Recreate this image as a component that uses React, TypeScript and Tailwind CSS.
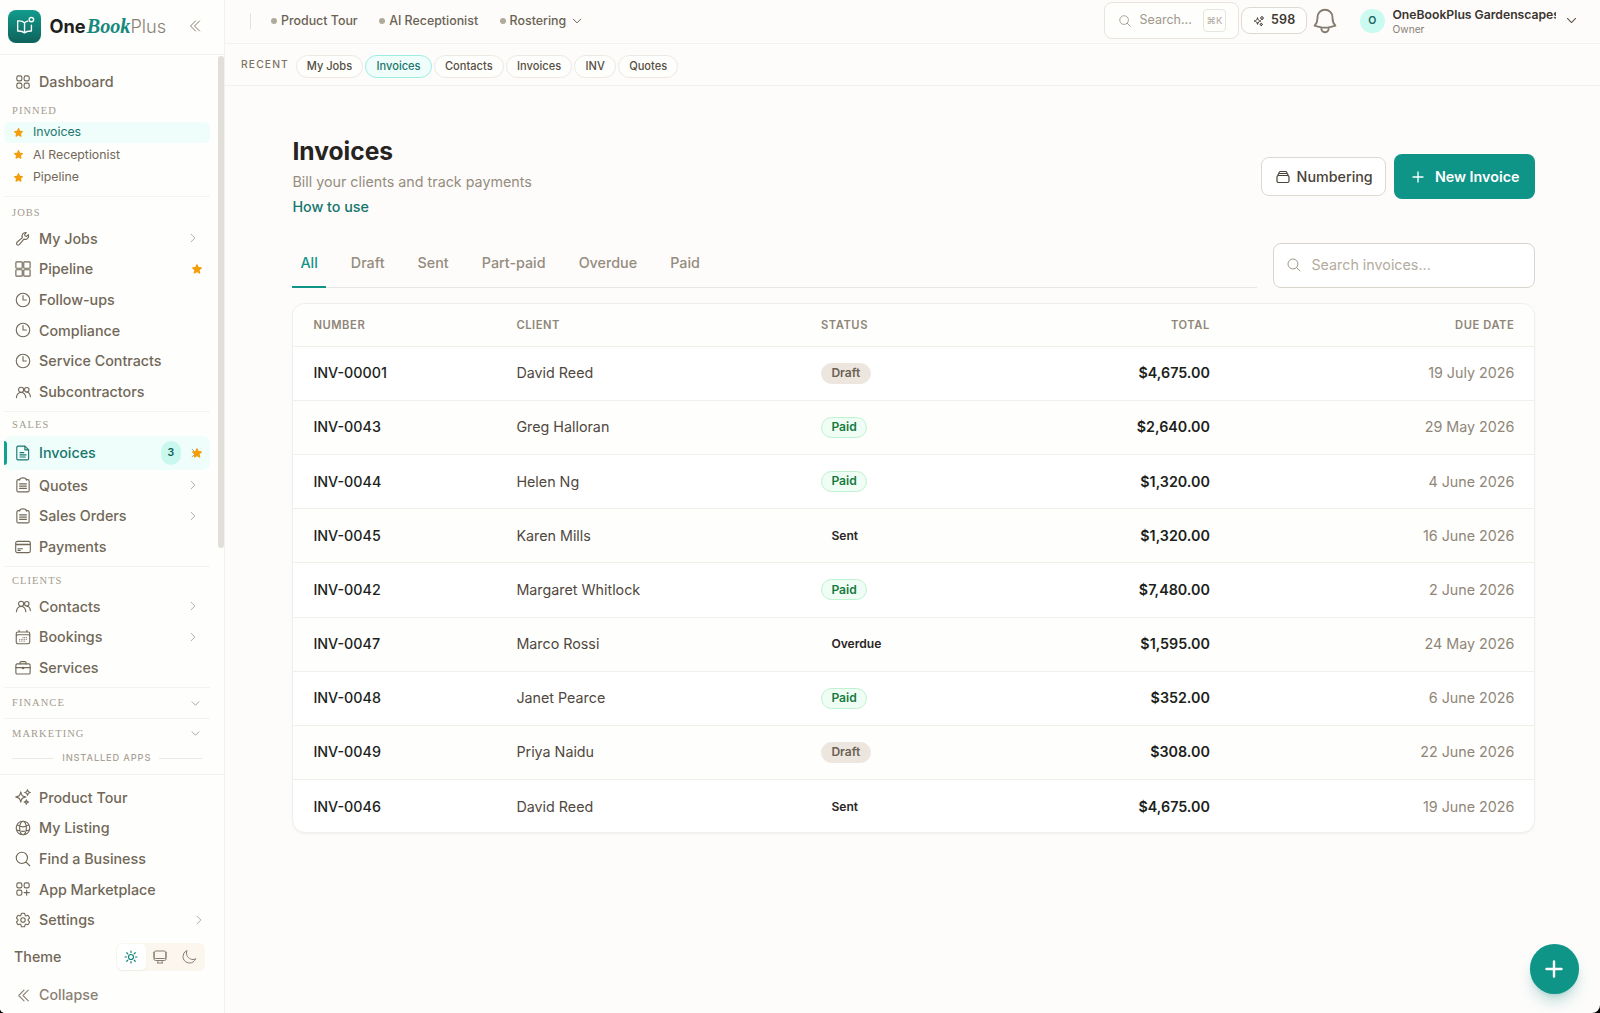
import type { ReactNode } from "react";
import {
  HiOutlineBell,
  HiOutlineCalendarDays,
  HiOutlineChevronDoubleLeft,
  HiOutlineChevronDown,
  HiOutlineChevronRight,
  HiOutlineClock,
  HiOutlineCog6Tooth,
  HiOutlineComputerDesktop,
  HiOutlineCreditCard,
  HiOutlineGlobeAlt,
  HiOutlineMagnifyingGlass,
  HiOutlineMoon,
  HiOutlinePlus,
  HiOutlineRectangleStack,
  HiOutlineSparkles,
  HiOutlineSquares2X2,
  HiOutlineSquaresPlus,
  HiOutlineSun,
  HiStar,
} from "react-icons/hi2";

const Svg = ({ children, className = "size-[18px]" }: { children: ReactNode; className?: string }) => (
  <svg
    viewBox="0 0 24 24"
    fill="none"
    stroke="currentColor"
    strokeWidth="1.5"
    strokeLinecap="round"
    strokeLinejoin="round"
    className={className}
  >
    {children}
  </svg>
);

const WrenchIcon = () => (
  <Svg>
    <path d="m11.200 11.400-7.200 6.300a2.100 2.100 0 0 0 3 3l6.300-7.200a4.600 4.600 0 0 0 5.900-6l-2.400 2.300-2.100-.5-.5-2.100 2.200-2.300a4.600 4.600 0 0 0-5.200 6.500Z" />
  </Svg>
);

const GridIcon = () => (
  <Svg>
    <rect x="2.5" y="2.5" width="8.5" height="8.5" rx="1" />
    <rect x="13" y="2.5" width="8.5" height="8.5" rx="1" />
    <rect x="2.5" y="13" width="8.5" height="8.5" rx="1" />
    <rect x="13" y="13" width="8.5" height="8.5" rx="1" />
  </Svg>
);

const PeopleIcon = () => (
  <Svg>
    <circle cx="9.5" cy="9" r="3.4" />
    <circle cx="17" cy="9" r="3" />
    <path d="M3.2 19.5c.4-4 2.900-6.900 6.300-6.900s5.900 2.900 6.300 6.900M17 12.200c2.600.2 4.500 2.600 4.900 6" />
  </Svg>
);

const DocIcon = () => (
  <Svg>
    <path d="M5.500 2.800h9l5 5v11.400a2 2 0 0 1-2 2h-12a1.800 1.800 0 0 1-1.800-1.800V4.600a1.800 1.800 0 0 1 1.800-1.800Z" />
    <path d="M14.500 3v4.800h4.800M8 11.500h5M8 14.500h8M8 17.300h7" />
  </Svg>
);

const ClipboardIcon = () => (
  <Svg>
    <path d="M7.500 4.800H5.800a2 2 0 0 0-2 2v12.400a2 2 0 0 0 2 2h12.400a2 2 0 0 0 2-2V6.800a2 2 0 0 0-2-2h-1.700" />
    <path d="M7.500 5.200c0-1.800 1.500-2.700 4.500-2.700s4.500.9 4.500 2.700M7.500 10.500h9M7.500 13.500h9M7.500 16.500h9" />
  </Svg>
);

const BriefcaseIcon = () => (
  <Svg>
    <rect x="2.500" y="6.500" width="19" height="13.500" rx="1.800" />
    <path d="M8 6.500V5a1.500 1.500 0 0 1 1.500-1.500h5A1.500 1.500 0 0 1 16 5v1.500M2.500 11.500h19" />
    <circle cx="12" cy="12" r="1" fill="currentColor" />
  </Svg>
);

const iconClass = "size-[18px]";

type NavItem = { label: string; icon: ReactNode; chevron?: boolean; star?: boolean };

const jobs: NavItem[] = [
  { label: "My Jobs", icon: <WrenchIcon />, chevron: true },
  { label: "Pipeline", icon: <GridIcon />, star: true },
  { label: "Follow-ups", icon: <HiOutlineClock className={iconClass} /> },
  { label: "Compliance", icon: <HiOutlineClock className={iconClass} /> },
  { label: "Service Contracts", icon: <HiOutlineClock className={iconClass} /> },
  { label: "Subcontractors", icon: <PeopleIcon /> },
];

const sales: NavItem[] = [
  { label: "Quotes", icon: <ClipboardIcon />, chevron: true },
  { label: "Sales Orders", icon: <ClipboardIcon />, chevron: true },
  { label: "Payments", icon: <HiOutlineCreditCard className={iconClass} /> },
];

const clients: NavItem[] = [
  { label: "Contacts", icon: <PeopleIcon />, chevron: true },
  { label: "Bookings", icon: <HiOutlineCalendarDays className={iconClass} />, chevron: true },
  { label: "Services", icon: <BriefcaseIcon /> },
];

const footer: NavItem[] = [
  { label: "Product Tour", icon: <HiOutlineSparkles className={iconClass} /> },
  { label: "My Listing", icon: <HiOutlineGlobeAlt className={iconClass} /> },
  { label: "Find a Business", icon: <HiOutlineMagnifyingGlass className={iconClass} /> },
  { label: "App Marketplace", icon: <HiOutlineSquaresPlus className={iconClass} /> },
];

const recent = ["My Jobs", "Invoices", "Contacts", "Invoices", "INV", "Quotes"];
const tabs = ["All", "Draft", "Sent", "Part-paid", "Overdue", "Paid"];

const invoices = [
  { number: "INV-00001", client: "David Reed", status: "Draft", total: "$4,675.00", due: "19 July 2026" },
  { number: "INV-0043", client: "Greg Halloran", status: "Paid", total: "$2,640.00", due: "29 May 2026" },
  { number: "INV-0044", client: "Helen Ng", status: "Paid", total: "$1,320.00", due: "4 June 2026" },
  { number: "INV-0045", client: "Karen Mills", status: "Sent", total: "$1,320.00", due: "16 June 2026" },
  { number: "INV-0042", client: "Margaret Whitlock", status: "Paid", total: "$7,480.00", due: "2 June 2026" },
  { number: "INV-0047", client: "Marco Rossi", status: "Overdue", total: "$1,595.00", due: "24 May 2026" },
  { number: "INV-0048", client: "Janet Pearce", status: "Paid", total: "$352.00", due: "6 June 2026" },
  { number: "INV-0049", client: "Priya Naidu", status: "Draft", total: "$308.00", due: "22 June 2026" },
  { number: "INV-0046", client: "David Reed", status: "Sent", total: "$4,675.00", due: "19 June 2026" },
];

const statusClass: Record<string, string> = {
  Draft: "bg-[#ece6df] border-[#ece6df] text-[#6b6154]",
  Paid: "bg-[#effdf4] border-[#bdf3d0] text-[#187a40]",
  Sent: "border-transparent text-[#292524]",
  Overdue: "border-transparent text-[#292524]",
};

const NavRow = ({ item }: { item: NavItem }) => (
  <div className="flex h-[30.65px] shrink-0 items-center pl-[14px] pr-3 text-[#716858]">
    {item.icon}
    <span className="ml-[7px] flex-1 text-[14.3px] font-medium">{item.label}</span>
    {item.chevron && <HiOutlineChevronRight className="mr-[7px] size-3 text-[#9a9184]" />}
    {item.star && <HiStar className="mr-[3px] size-3 text-[#f59e0b]" />}
  </div>
);

const SectionTitle = ({ children, className }: { children: ReactNode; className: string }) => (
  <div
    className={`flex shrink-0 items-center justify-between pl-3 pr-[17px] font-['Liberation_Serif',serif] text-[10.5px] font-medium tracking-[0.1em] text-[#a39b8d] ${className}`}
  >
    {children}
  </div>
);

const Divider = () => <div className="ml-1 mr-2 h-px shrink-0 bg-[#f5f3ef]" />;

const Sidebar = () => (
  <aside className="flex w-[224.5px] shrink-0 flex-col border-r border-[#f3f1ed] bg-[#fefefd]">
    <div className="flex h-[55px] shrink-0 items-center border-b border-[#f5f3ef] pl-2 pr-[21px] pb-[2px]">
      <div className="flex size-[33px] items-center justify-center rounded-lg bg-linear-to-b from-[#129c8d] to-[#0e625b] text-white">
        <Svg className="size-[22px]">
          <path d="M11.500 8.500C9.500 6.500 7 6.200 4 6.500v11c3-.2 5.500.2 7.500 2 2-1.800 4.500-2.200 7.500-2V11M11.500 8.500v11M11.500 8.500c1-1 2.200-1.600 3.500-1.900" />
          <circle cx="19" cy="5" r="2.400" />
        </Svg>
      </div>
      <div className="ml-[8.5px] flex flex-1 items-baseline text-[18.2px] leading-none">
        <span className="font-bold text-[#211f1c]">One</span>
        <span className="ml-px font-['Liberation_Serif',serif] text-[20.2px] font-bold italic text-[#16897c]">Book</span>
        <span className="font-light text-[#8a8174]">Plus</span>
      </div>
      <HiOutlineChevronDoubleLeft className="size-4 text-[#857c6e]" />
    </div>

    <div className="flex h-[719px] shrink-0">
      <nav className="flex w-[217.5px] flex-col overflow-hidden pt-[11.5px]">
        <NavRow item={{ label: "Dashboard", icon: <HiOutlineSquares2X2 className={iconClass} /> }} />
        <SectionTitle className="h-[24px] pt-[3px]">PINNED</SectionTitle>
        {["Invoices", "AI Receptionist", "Pipeline"].map((label, i) => (
          <div
            key={label}
            className={`ml-1 mr-2 my-px flex h-[20.5px] shrink-0 items-center rounded-md pl-[9px] text-[12.3px] ${
              i === 0 ? "bg-[#effdfb] text-[#1a766c]" : "text-[#716858]"
            }`}
          >
            <HiStar className="mr-[9px] size-[11px] text-[#f59e0b]" />
            {label}
          </div>
        ))}
        <div className="h-[7px] shrink-0" />
        <Divider />
        <SectionTitle className="h-[26.5px] pt-1.5">JOBS</SectionTitle>
        {jobs.map((item) => (
          <NavRow key={item.label} item={item} />
        ))}
        <div className="h-[4px] shrink-0" />
        <Divider />
        <SectionTitle className="h-[24px] pt-px">SALES</SectionTitle>
        <div className="relative ml-1 mr-2 flex h-[34px] shrink-0 items-center rounded-lg bg-[#effdfb] pl-[10px] text-[#17776d]">
          <span className="absolute left-0 top-[5px] h-6 w-[3px] rounded-r-full bg-[#12a090]" />
          <DocIcon />
          <span className="ml-[7px] flex-1 text-[14.3px] font-medium">Invoices</span>
          <span className="mr-2 flex h-6 w-[19.5px] items-center justify-center rounded-full bg-[#c9f8ef] text-[10.5px] font-semibold text-[#156058]">
            3
          </span>
          <span className="relative mr-[7px] flex size-[14px] items-center">
            <HiOutlineChevronRight className="absolute -left-px size-3 text-[#8a8174]" />
            <HiStar className="absolute left-0.5 size-3 text-[#f59e0b]" />
          </span>
        </div>
        {sales.map((item) => (
          <NavRow key={item.label} item={item} />
        ))}
        <div className="h-[4.5px] shrink-0" />
        <Divider />
        <SectionTitle className="h-[23.5px] pt-[3px]">CLIENTS</SectionTitle>
        {clients.map((item) => (
          <NavRow key={item.label} item={item} />
        ))}
        <div className="h-[4.5px] shrink-0" />
        <Divider />
        <SectionTitle className="h-[29.7px]">
          FINANCE
          <HiOutlineChevronDown className="size-[11px] text-[#8a8174]" />
        </SectionTitle>
        <Divider />
        <SectionTitle className="h-[29.7px]">
          MARKETING
          <HiOutlineChevronDown className="size-[11px] text-[#8a8174]" />
        </SectionTitle>
        <div className="flex h-[19px] shrink-0 items-center gap-2 pl-3 pr-4 text-[9.3px] font-medium tracking-[0.09em] text-[#aaa295]">
          <span className="h-px flex-1 bg-[#eceae5]" />
          INSTALLED APPS
          <span className="h-px flex-1 bg-[#eceae5]" />
        </div>
      </nav>
      <div className="mt-px h-[492px] w-1.5 rounded-full bg-[#e2dfd9]" />
    </div>

    <div className="border-t border-[#f3f1ed] pt-[7px]">
      {footer.map((item) => (
        <NavRow key={item.label} item={item} />
      ))}
      <div className="flex h-[30.65px] items-center pl-[14px] text-[#716858]">
        <HiOutlineCog6Tooth className={iconClass} />
        <span className="ml-[7px] flex-1 text-[14.3px] font-medium">Settings</span>
        <HiOutlineChevronRight className="mr-[19px] size-3 text-[#9a9184]" />
      </div>
      <div className="mt-[7.5px] flex h-7 items-center justify-between pl-[14px] pr-[19px]">
        <span className="text-[14.3px] font-medium text-[#716858]">Theme</span>
        <div className="flex h-[28px] items-center rounded-md bg-[#fcf7ee] p-px text-[#857c6e]">
          <span className="flex h-[26px] w-[29px] items-center justify-center rounded-[5px] bg-white text-[#12857a] shadow-xs">
            <HiOutlineSun className="size-4" strokeWidth={1.8} />
          </span>
          <span className="flex w-[29px] justify-center">
            <HiOutlineComputerDesktop className="size-4" />
          </span>
          <span className="flex w-[29px] justify-center">
            <HiOutlineMoon className="size-4" />
          </span>
        </div>
      </div>
      <div className="mt-[9px] flex h-[31px] items-center pl-[15px] text-[#8a8174]">
        <HiOutlineChevronDoubleLeft className="size-[17px]" />
        <span className="ml-[7px] text-[14.3px] font-medium">Collapse</span>
      </div>
    </div>
  </aside>
);

const TopBar = () => (
  <header className="flex h-[43.5px] shrink-0 items-center border-b border-[#f3f1ed] pb-px pl-[25px] pr-[22px]">
    <div className="h-4 w-px bg-[#e4e0da]" />
    <div className="ml-[20.5px] flex items-center gap-[21.5px] pt-px text-[12.4px] font-medium text-[#6b6253]">
      {["Product Tour", "AI Receptionist", "Rostering"].map((label) => (
        <div key={label} className="flex items-center">
          <span className="mr-1 size-1.5 rounded-full bg-[#b0aa9c]" />
          {label}
          {label === "Rostering" && <HiOutlineChevronDown className="ml-[5px] size-3" strokeWidth={2} />}
        </div>
      ))}
    </div>
    <div className="ml-auto flex items-center">
      <div className="flex h-[37px] w-[135.5px] items-center rounded-lg border border-[#e8e4de] bg-[#fefefd] pl-[13px]">
        <HiOutlineMagnifyingGlass className="size-3.5 text-[#a09789]" />
        <span className="ml-2 text-[12.5px] text-[#a09789]">Search...</span>
        <span className="ml-auto mr-3 flex h-[23px] w-[23px] items-center justify-center rounded border border-[#e8e4de] text-[9.5px] text-[#b3ab9f]">
          ⌘K
        </span>
      </div>
      <div className="ml-0.5 flex h-[27px] w-[66px] items-center rounded-[9px] border border-[#dedad3] bg-[#fefefd] pl-[11px] text-[12.5px] font-semibold text-[#3d3831]">
        <HiOutlineSparkles className="mr-[6px] size-3" strokeWidth={1.8} />
        <span className="tracking-[0.02em]">598</span>
      </div>
      <HiOutlineBell className="ml-[3px] size-[30px] text-[#857c6e]" />
      <div className="ml-5 flex size-[24.5px] items-center justify-center rounded-full bg-[#cbfaf1] text-[10.5px] font-semibold text-[#17655d]">
        O
      </div>
      <div className="ml-[8px] flex w-[163.5px] flex-col pt-px">
        <span className="overflow-hidden whitespace-nowrap text-[12.2px] leading-4 font-semibold text-[#3a352e]">
          OneBookPlus Gardenscapes
        </span>
        <span className="text-[10.2px] leading-[13px] text-[#8a8174]">Owner</span>
      </div>
      <HiOutlineChevronDown className="ml-[9px] size-[13px] text-[#5c5447]" strokeWidth={2} />
    </div>
  </header>
);

const RecentBar = () => (
  <div className="flex h-[42.5px] shrink-0 items-center border-b border-[#f3f1ed] pl-[16.5px]">
    <span className="w-[54.5px] text-[10.3px] font-medium tracking-[0.11em] text-[#7d7466]">RECENT</span>
    <div className="flex gap-[2px] pt-1">
      {recent.map((label, i) => (
        <span
          key={i}
          className={`flex h-[23px] items-center rounded-full border px-[10.2px] text-[11.1px] font-medium ${
            i === 1 ? "border-[#9beedf] bg-[#effdfb] text-[#1a766c]" : "border-[#ece9e3] bg-[#fefefd] text-[#574f43]"
          }`}
        >
          {label}
        </span>
      ))}
    </div>
  </div>
);

const InvoiceTable = () => (
  <div className="mt-[15px] h-[530px] overflow-hidden rounded-[13px] border border-[#f1efeb] bg-white shadow-xs">
    <table className="w-full table-fixed text-[14.3px]">
      <colgroup>
        <col className="w-[203px]" />
        <col className="w-[304.5px]" />
        <col className="w-[204px]" />
        <col />
        <col className="w-[304.5px]" />
      </colgroup>
      <thead>
        <tr className="h-[42.4px] border-b border-[#f1efeb] bg-[#fefefd] text-left text-[11.2px] tracking-[0.05em] text-[#8f8678]">
          <th className="px-5 font-semibold">NUMBER</th>
          <th className="px-5 font-semibold">CLIENT</th>
          <th className="px-5 font-semibold">STATUS</th>
          <th className="px-5 text-right font-semibold">TOTAL</th>
          <th className="px-5 text-right font-semibold">DUE DATE</th>
        </tr>
      </thead>
      <tbody>
        {invoices.map((invoice) => (
          <tr key={invoice.number} className="h-[54.15px] border-b border-[#f1efeb] last:border-b-0 even:bg-[#fefefc]">
            <td className="px-5 pb-px font-medium text-[#211f1c]">{invoice.number}</td>
            <td className="px-5 pb-px text-[#4f483e]">{invoice.client}</td>
            <td className="px-5 pb-[2px]">
              <span
                className={`inline-flex h-[21px] items-center rounded-full border px-[9.5px] align-middle text-[12.1px] font-semibold ${
                  statusClass[invoice.status]
                }`}
              >
                {invoice.status}
              </span>
            </td>
            <td className="px-5 pb-px text-right font-semibold text-[#211f1c]">{invoice.total}</td>
            <td className="px-5 pb-px text-right text-[#8f8678]">{invoice.due}</td>
          </tr>
        ))}
      </tbody>
    </table>
  </div>
);

export default function App() {
  return (
    <div className="h-[1013px] bg-black font-['Inter',sans-serif] antialiased">
      <div className="relative flex h-full overflow-hidden rounded-bl-[5px] rounded-br-[8px] bg-[#fdfcfb]">
        <Sidebar />
        <div className="flex min-w-0 flex-1 flex-col">
          <TopBar />
          <RecentBar />
          <main className="pl-[67.9px] pr-[64.6px] pt-[50px]">
            <div className="flex items-center justify-between">
              <div>
                <h1 className="text-[24.6px] leading-[31px] font-bold text-[#262320]">Invoices</h1>
                <p className="text-[14.3px] leading-[30px] text-[#958c7e]">Bill your clients and track payments</p>
                <a className="block text-[14.3px] leading-[20px] font-medium text-[#14756b]">How to use</a>
              </div>
              <div className="flex items-center gap-2">
                <button className="flex h-[39px] w-[124.5px] items-center justify-center rounded-lg border border-[#ddd9d2] bg-white text-[14.3px] font-medium text-[#4a4339]">
                  <HiOutlineRectangleStack className="mr-1.5 size-4" strokeWidth={1.8} />
                  Numbering
                </button>
                <button className="flex h-[45px] w-[141.5px] items-center justify-center rounded-lg bg-[#0f9488] text-[14.3px] font-semibold text-white">
                  <HiOutlinePlus className="mr-[9px] size-4" strokeWidth={2} />
                  New Invoice
                </button>
              </div>
            </div>

            <div className="mt-[26px] flex items-end gap-4">
              <div className="flex flex-1 gap-[17.1px] border-b border-[#eae7e2]">
                {tabs.map((tab, i) => (
                  <span
                    key={tab}
                    className={`-mb-px flex h-[40px] items-start border-b-2 px-2 pt-1 text-[14.3px] font-medium ${
                      i === 0 ? "border-[#0f9488] text-[#0f9488]" : "border-transparent text-[#958c7e]"
                    }`}
                  >
                    {tab}
                  </span>
                ))}
              </div>
              <div className="flex h-[45px] w-[262px] items-center rounded-lg border border-[#d9d5ce] bg-white pb-px pl-3 text-[14.3px] text-[#b3aca0]">
                <HiOutlineMagnifyingGlass className="mr-[9px] size-4 text-[#a09789]" />
                Search invoices...
              </div>
            </div>

            <InvoiceTable />
          </main>
        </div>

        <button className="absolute bottom-[19.5px] right-[21px] flex size-[49.5px] items-center justify-center rounded-full bg-[#0f9488] text-white shadow-lg shadow-teal-700/25">
          <HiOutlinePlus className="size-6" strokeWidth={2.4} />
        </button>
      </div>
    </div>
  );
}
